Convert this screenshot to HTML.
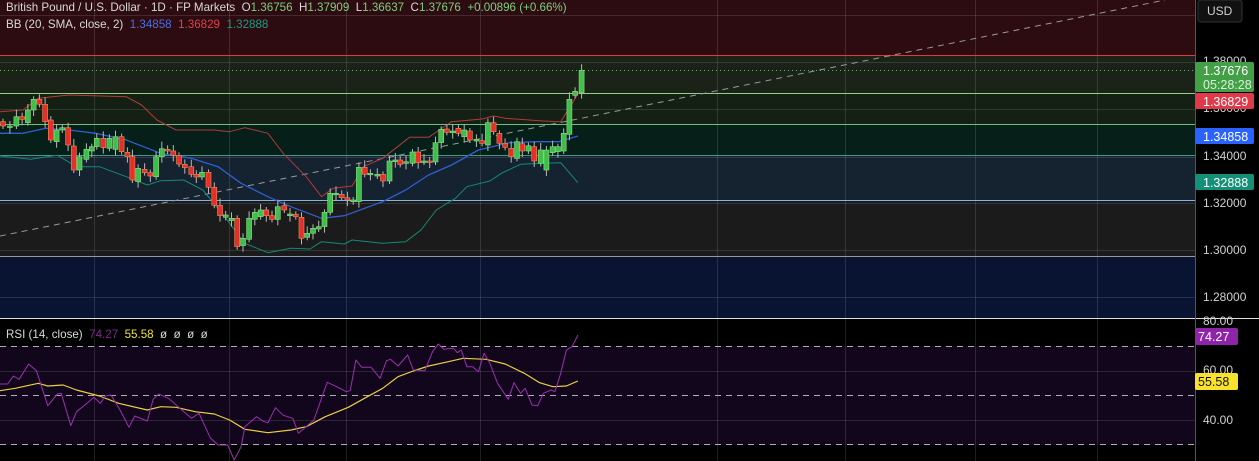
<!DOCTYPE html>
<html><head><meta charset="utf-8"><style>
html,body{margin:0;padding:0;background:#000;width:1259px;height:461px;overflow:hidden;font-family:"Liberation Sans",sans-serif}
svg{position:absolute;left:0;top:0}
.lg{position:absolute;font-size:11.6px;color:#d8d8d8;white-space:nowrap}
</style></head><body>
<svg id="s" width="1259" height="461" xmlns="http://www.w3.org/2000/svg">
<rect x="0" y="0" width="1195" height="55" fill="#2c0c10"/>
<rect x="0" y="55" width="1195" height="38" fill="#1b2318"/>
<rect x="0" y="93" width="1195" height="31" fill="#132013"/>
<rect x="0" y="124" width="1195" height="31" fill="#061f19"/>
<rect x="0" y="155" width="1195" height="45" fill="#15222f"/>
<rect x="0" y="200" width="1195" height="56" fill="#1b1b1b"/>
<rect x="0" y="256" width="1195" height="62" fill="#091433"/>
<rect x="0" y="319" width="1195" height="142" fill="#000"/>
<rect x="0" y="346" width="1195" height="99" fill="#12061c"/>
<g stroke="#ffffff" stroke-opacity="0.12" stroke-width="1">
<line x1="0" y1="15.5" x2="1195" y2="15.5"/>
<line x1="0" y1="62.5" x2="1195" y2="62.5"/>
<line x1="0" y1="109.5" x2="1195" y2="109.5"/>
<line x1="0" y1="157.5" x2="1195" y2="157.5"/>
<line x1="0" y1="203.5" x2="1195" y2="203.5"/>
<line x1="0" y1="250.5" x2="1195" y2="250.5"/>
<line x1="0" y1="297.5" x2="1195" y2="297.5"/>
<line x1="0" y1="371.5" x2="1195" y2="371.5"/>
<line x1="0" y1="420.5" x2="1195" y2="420.5"/>
<line x1="94.5" y1="0" x2="94.5" y2="461"/><line x1="229.5" y1="0" x2="229.5" y2="461"/>
<line x1="346.5" y1="0" x2="346.5" y2="461"/><line x1="480.5" y1="0" x2="480.5" y2="461"/>
<line x1="717.5" y1="0" x2="717.5" y2="461"/><line x1="845.5" y1="0" x2="845.5" y2="461"/>
<line x1="975.5" y1="0" x2="975.5" y2="461"/><line x1="1097.5" y1="0" x2="1097.5" y2="461"/>
</g>
<line x1="0" y1="55.5" x2="1195" y2="55.5" stroke="#e03a3a"/>
<line x1="0" y1="70.5" x2="1195" y2="70.5" stroke="#5fae6a" stroke-dasharray="1 3"/>
<line x1="0" y1="93.5" x2="1195" y2="93.5" stroke="#8ed07f"/>
<line x1="0" y1="124.5" x2="1195" y2="124.5" stroke="#6cc27a"/>
<line x1="0" y1="155.5" x2="1195" y2="155.5" stroke="#3f9a8a"/>
<line x1="0" y1="200.5" x2="1195" y2="200.5" stroke="#7fb4e6"/>
<line x1="0" y1="256.5" x2="1195" y2="256.5" stroke="#9a9a9a"/>
<line x1="0" y1="318.5" x2="1259" y2="318.5" stroke="#e0e0e0"/>
<line x1="0" y1="236" x2="1165" y2="0" stroke="#9a9a9a" stroke-dasharray="6 5"/>
<g stroke="#d8d8d8" stroke-dasharray="6 5" stroke-opacity="0.8">
<line x1="0" y1="346.5" x2="1195" y2="346.5"/><line x1="0" y1="395.5" x2="1195" y2="395.5"/><line x1="0" y1="444.5" x2="1195" y2="444.5"/>
</g>
<g id="dyn"></g>
<line x1="1195.5" y1="0" x2="1195.5" y2="461" stroke="#555"/>
<rect x="1198" y="0" width="44" height="22" rx="3" fill="#111" stroke="#333"/>
<g font-family="Liberation Sans,sans-serif" font-size="12" fill="#d0d0d0">
<text x="1207" y="15">USD</text>
<text x="1203" y="65">1.38000</text>
<text x="1203" y="112">1.36000</text>
<text x="1203" y="160">1.34000</text>
<text x="1203" y="207">1.32000</text>
<text x="1203" y="254">1.30000</text>
<text x="1203" y="301">1.28000</text>
<text x="1203" y="325">80.00</text>
<text x="1203" y="374">60.00</text>
<text x="1203" y="424">40.00</text>
</g>
<rect x="1195" y="62" width="59" height="30" rx="2" fill="#43a047"/>
<rect x="1195" y="93" width="59" height="16" rx="2" fill="#e2394a"/>
<rect x="1195" y="128" width="59" height="16" rx="2" fill="#2962ff"/>
<rect x="1195" y="174" width="59" height="16" rx="2" fill="#149078"/>
<rect x="1195" y="328" width="43" height="17" rx="2" fill="#8e24aa"/>
<rect x="1195" y="373" width="43" height="17" rx="2" fill="#f7e12b"/>
<g font-family="Liberation Sans,sans-serif" font-size="12.5" fill="#fff">
<text x="1203" y="75">1.37676</text>
<text x="1203" y="89" fill="#d8f0d8">05:28:28</text>
<text x="1203" y="106">1.36829</text>
<text x="1203" y="141">1.34858</text>
<text x="1203" y="187">1.32888</text>
<text x="1198" y="341">74.27</text>
<text x="1198" y="386" fill="#111">55.58</text>
</g>
</svg>
<div class="lg" style="left:6px;top:1px">British Pound / U.S. Dollar · 1D · FP Markets &nbsp;O<span style="color:#7ccf7a">1.36756</span> &nbsp;H<span style="color:#7ccf7a">1.37909</span> &nbsp;L<span style="color:#7ccf7a">1.36637</span> &nbsp;C<span style="color:#7ccf7a">1.37676</span> &nbsp;<span style="color:#7ccf7a">+0.00896 (+0.66%)</span></div>
<div class="lg" style="left:6px;top:18px">BB (20, SMA, close, 2) &nbsp;<span style="color:#4a6ee0">1.34858</span> &nbsp;<span style="color:#e0404a">1.36829</span> &nbsp;<span style="color:#1c9a80">1.32888</span></div>
<div class="lg" style="left:6px;top:328px">RSI (14, close) &nbsp;<span style="color:#7e2a8a">74.27</span> &nbsp;<span style="color:#f0e040">55.58</span> &nbsp;ø &nbsp;ø &nbsp;ø &nbsp;ø</div>
<script>
var K=2.613,NS="http://www.w3.org/2000/svg",g=document.getElementById('dyn');
function el(n,a){var e=document.createElementNS(NS,n);for(var k in a)e.setAttribute(k,a[k]);g.appendChild(e);return e;}
function pl(p,c,w,oy){var s=[];for(var i=0;i<p.length;i+=2)s.push((p[i]/K).toFixed(1)+','+(p[i+1]/3+oy).toFixed(1));el('polyline',{points:s.join(' '),fill:'none',stroke:c,'stroke-width':w||1,'stroke-linejoin':'round'});}
pl([0,185,60,180,100,145,180,135,330,140,370,165,410,210,460,240,560,240,600,245,640,233,700,250,740,310,800,380,840,440,870,415,920,408,950,350,1000,325,1070,262,1120,262,1180,215,1260,207,1290,198,1320,205,1420,213,1465,215,1490,170,1512,128],'#b33a3a',1,50);
pl([0,250,60,250,120,235,180,240,250,250,330,270,420,310,500,325,570,350,630,400,700,440,760,470,840,505,900,497,1000,455,1060,420,1120,375,1180,345,1250,300,1330,278,1400,275,1460,275,1510,258],'#2f5fd0',1.3,50);
pl([0,318,80,328,150,316,200,350,260,350,330,380,385,405,420,392,480,390,530,420,580,490,640,580,700,608,760,595,810,597,840,575,900,582,920,570,1000,580,1060,575,1100,540,1140,480,1190,445,1220,410,1280,393,1310,370,1360,343,1420,340,1465,338,1510,398],'#148a74',1,50);
var C=[[0,215,228,0],[18,228,232,1],[35,200,228,1],[50,200,208,0],[65,180,218,1],[80,148,180,1],[95,148,163,0],[110,163,215,0],[125,210,270,0],[140,240,275,1],[155,233,240,1],[170,233,285,0],[185,288,360,0],[200,320,360,1],[218,298,328,1],[232,290,303,1],[245,265,290,1],[262,265,293,0],[278,265,295,1],[294,260,298,1],[310,260,305,0],[325,307,320,0],[338,320,390,0],[353,355,395,1],[370,358,368,0],[385,368,378,0],[400,320,380,1],[415,296,320,1],[430,298,303,0],[445,303,316,0],[460,316,342,0],[475,343,353,0],[492,350,373,0],[505,373,381,0],[520,367,381,1],[537,367,412,0],[552,412,466,0],[567,466,497,0],[582,495,502,1],[597,505,512,1],[612,505,590,0],[627,565,587,1],[643,505,568,1],[658,487,508,1],[673,480,500,1],[688,480,497,0],[703,497,508,0],[718,470,508,1],[735,467,480,0],[750,492,497,1],[765,493,500,0],[780,502,565,0],[795,550,562,1],[810,535,550,1],[825,530,537,1],[840,487,530,1],[855,430,487,1],[870,430,433,1],[885,433,443,0],[900,443,450,0],[915,450,455,1],[930,352,455,1],[945,352,373,0],[960,370,373,1],[978,373,378,1],[993,373,393,0],[1010,333,393,1],[1025,330,335,1],[1038,330,343,0],[1053,335,340,1],[1070,306,340,1],[1085,306,338,0],[1100,333,336,1],[1115,333,336,0],[1130,278,336,1],[1145,238,278,1],[1160,237,247,0],[1175,243,248,1],[1190,235,250,0],[1205,240,260,1],[1220,243,270,0],[1237,268,273,1],[1252,272,280,0],[1267,218,285,1],[1282,218,245,0],[1297,250,280,0],[1312,280,292,0],[1328,295,320,0],[1343,275,325,1],[1357,281,303,0],[1373,287,303,1],[1388,290,333,0],[1405,300,340,1],[1420,300,360,1],[1436,290,308,1],[1450,290,305,1],[1465,250,303,1],[1480,148,253,1],[1495,124,136,1],[1512,61,128,1]];
C.forEach(function(c,i){var x=c[0]/K+3,t=c[1]/3+50,b=c[2]/3+50;var h=Math.max(b-t,1.5);var wt=t-3-(i*7%5),wb=b+3+(i*3%6);
el('line',{x1:x.toFixed(1),y1:wt,x2:x.toFixed(1),y2:wb,stroke:'#b8b8b8','stroke-width':1});
el('rect',{x:(x-2.5).toFixed(1),y:t.toFixed(1),width:5,height:h.toFixed(1),fill:c[3]?'#3fbf4a':'#e5302a',stroke:c[3]?'#8fdc8a':'#f08a5a','stroke-width':0.6});});
pl([0,242,40,235,100,220,125,228,165,225,200,240,260,258,310,280,385,300,420,290,460,292,510,305,560,312,600,330,640,358,700,368,760,360,800,350,850,320,910,292,960,260,1000,235,1040,200,1080,183,1120,168,1160,158,1210,145,1270,148,1320,162,1370,190,1410,218,1445,230,1480,228,1510,213],'#e8d040',1.2,310);
pl([0,222,20,222,35,198,50,208,75,162,95,182,125,287,150,252,160,250,185,347,200,305,225,282,245,262,262,280,275,258,290,255,315,303,337,352,352,318,385,333,400,268,415,252,440,265,470,295,500,325,520,310,550,385,570,405,595,405,612,450,630,410,640,350,670,320,690,335,700,338,720,293,740,316,765,325,780,370,820,330,855,217,880,230,905,245,915,242,930,150,945,172,970,172,993,205,1010,152,1020,148,1040,168,1065,135,1080,180,1110,182,1130,125,1145,102,1160,118,1185,115,1195,128,1205,120,1220,170,1235,170,1250,185,1265,130,1280,160,1300,220,1328,268,1343,218,1360,250,1372,235,1390,285,1405,287,1420,250,1440,240,1450,245,1465,190,1480,120,1495,110,1510,75],'#9c2fb0',1,310);
</script>
</body></html>
